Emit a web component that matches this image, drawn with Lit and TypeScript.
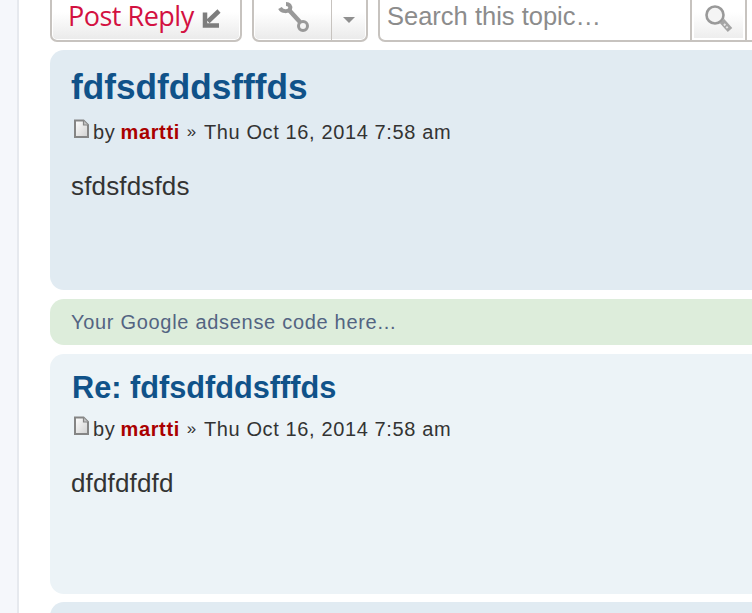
import { LitElement, html, css } from "lit";
import { customElement } from "lit/decorators.js";

const pageIcon = html`<svg class="pi" width="17" height="20" viewBox="0 0 17 20"><defs><linearGradient id="pg" x1="0" y1="0" x2="1" y2="1"><stop offset="0" stop-color="#fff"/><stop offset="1" stop-color="#d0d0d0"/></linearGradient></defs><path d="M2 1.500H10.500L15 6V18H2Z" fill="url(#pg)" stroke="#858585" stroke-width="2"/><path d="M10.500 1.500V6H15" fill="#c4c4c4" stroke="#858585" stroke-width="1.200"/></svg>`;

@customElement("app-root")
export class AppRoot extends LitElement {
  static styles = css`
    :host { display: block; height: 613px; overflow: hidden; background: #fff; font-family: "Liberation Sans", Arial, sans-serif; }
    .page { display: flex; height: 613px; }
    .rail { width: 17px; flex: none; background: #f5f7fb; border-right: 2px solid #e6e9ee; }
    .wrap { flex: 1; min-width: 0; padding-left: 31px; overflow: hidden; display: flex; flex-direction: column; }
    .bar { height: 42px; flex: none; display: flex; align-items: flex-end; gap: 10px; margin-bottom: 8px; width: 760px; }
    .btn { box-sizing: border-box; height: 60px; border: 2px solid #c7c3bf; border-radius: 7px; background: linear-gradient(#fff 50%, #eaeaea); display: flex; box-shadow: inset 0 0 0 1px #fff; }
    .reply { width: 192px; padding: 19px 0 0 16px; gap: 7px; color: #d31141; font-family: "Open Sans", sans-serif; font-size: 27px; letter-spacing: -0.5px; line-height: 26px; white-space: nowrap; }
    .reply svg { margin-top: 6px; }
    .tools { width: 116px; }
    .wrench { width: 78px; display: flex; justify-content: center; align-items: flex-end; padding-bottom: 8px; border-right: 1px solid #c7c3bf; box-sizing: border-box; }
    .drop { flex: 1; display: flex; justify-content: center; align-items: flex-end; padding-bottom: 17px; }
    .caret { width: 0; height: 0; border: 6px solid transparent; border-top: 6px solid #8f8f8f; border-bottom: 0; }
    .search { width: 400px; box-sizing: border-box; height: 60px; border: 2px solid #c7c3bf; border-radius: 7px; background: #fff; display: flex; }
    .stext { width: 310px; box-sizing: border-box; padding: 18px 0 0 7px; color: #8c8c8c; font-size: 25.5px; line-height: 29px; white-space: nowrap; }
    .sbtn { width: 57px; box-sizing: border-box; border-left: 2px solid #c7c3bf; border-right: 2px solid #c7c3bf; background: linear-gradient(#fff 50%, #ececec); box-shadow: inset 0 0 0 2px #fff; display: flex; justify-content: center; align-items: flex-end; padding-bottom: 8px; }
    .post { height: 240px; flex: none; box-sizing: border-box; border-radius: 14px 0 0 14px; padding: 18px 0 0 21px; }
    .one { background: #e1ebf2; }
    .two { background: #ecf3f7; }
    h3 { margin: 0; color: #105289; font-size: 35.2px; line-height: 38px; font-weight: 700; white-space: nowrap; }
    .two h3 { margin: -3px 0 0 1px; font-size: 30.7px; }
    .meta { display: flex; align-items: flex-start; margin: 14px 0 0 2px; height: 24px; font-size: 20px; line-height: 24px; letter-spacing: 0.62px; color: #333; white-space: nowrap; }
    .two .meta { margin-top: 10px; }
    .pi { flex: none; margin: -1px 3px 0 0; }
    .meta .by { margin-right: -1px; }
    .meta b { color: #aa0000; margin: 0 7px 0 0; }
    .meta .q { margin-right: 7px; font-size: 17px; }
    .content { margin-top: 26px; font-size: 26px; line-height: 32px; color: #333; letter-spacing: 0.15px; }
    .ad { height: 46px; flex: none; box-sizing: border-box; margin: 9px 0; border-radius: 14px 0 0 14px; background: #ddeddb; padding: 0 0 0 21px; color: #536482; font-size: 20px; line-height: 46px; letter-spacing: 0.7px; white-space: nowrap; }
    .third { margin-top: 8px; }
  `;

  private post(cls: string, title: string, body: string) {
    return html`<div class="post ${cls}">
      <h3>${title}</h3>
      <div class="meta">${pageIcon}<span class="by">by&nbsp;</span><b>martti</b><span class="q">»</span><span>Thu Oct 16, 2014 7:58 am</span></div>
      <div class="content">${body}</div>
    </div>`;
  }

  render() {
    return html`<div class="page">
      <div class="rail"></div>
      <div class="wrap">
        <div class="bar">
          <div class="btn reply"><span>Post Reply</span>
            <svg width="20" height="20" viewBox="0 0 20 20"><path d="M18 2 7 12.500M4 3.500V16.500H18" fill="none" stroke="#7d7d7d" stroke-width="4.500"/></svg>
          </div>
          <div class="btn tools">
            <div class="wrench"><svg width="32" height="32" viewBox="0 0 32 32"><path d="M3 8C5 12 11 12 13 9C14 6 12 4 9 4" fill="none" stroke="#999" stroke-width="4"/><path d="M12 10 23 22" stroke="#999" stroke-width="4.500"/><circle cx="26" cy="26" r="4.500" fill="none" stroke="#999" stroke-width="3"/></svg></div>
            <div class="drop"><div class="caret"></div></div>
          </div>
          <div class="search"><div class="stext">Search this topic…</div>
            <div class="sbtn"><svg width="30" height="30" viewBox="0 0 30 30"><circle cx="11" cy="13" r="8.500" fill="#f4f4f4" stroke="#999" stroke-width="2.600"/><path d="M18 19 26 28" stroke="#a5a5a5" stroke-width="6"/><path d="M20 22 24 26.500" stroke="#e5e5e5" stroke-width="2" stroke-dasharray="2 1.500"/></svg></div>
          </div>
        </div>
        ${this.post("one", "fdfsdfddsfffds", "sfdsfdsfds")}
        <div class="ad">Your Google adsense code here...</div>
        ${this.post("two", "Re: fdfsdfddsfffds", "dfdfdfdfd")}
        <div class="post one third"></div>
      </div>
    </div>`;
  }
}
